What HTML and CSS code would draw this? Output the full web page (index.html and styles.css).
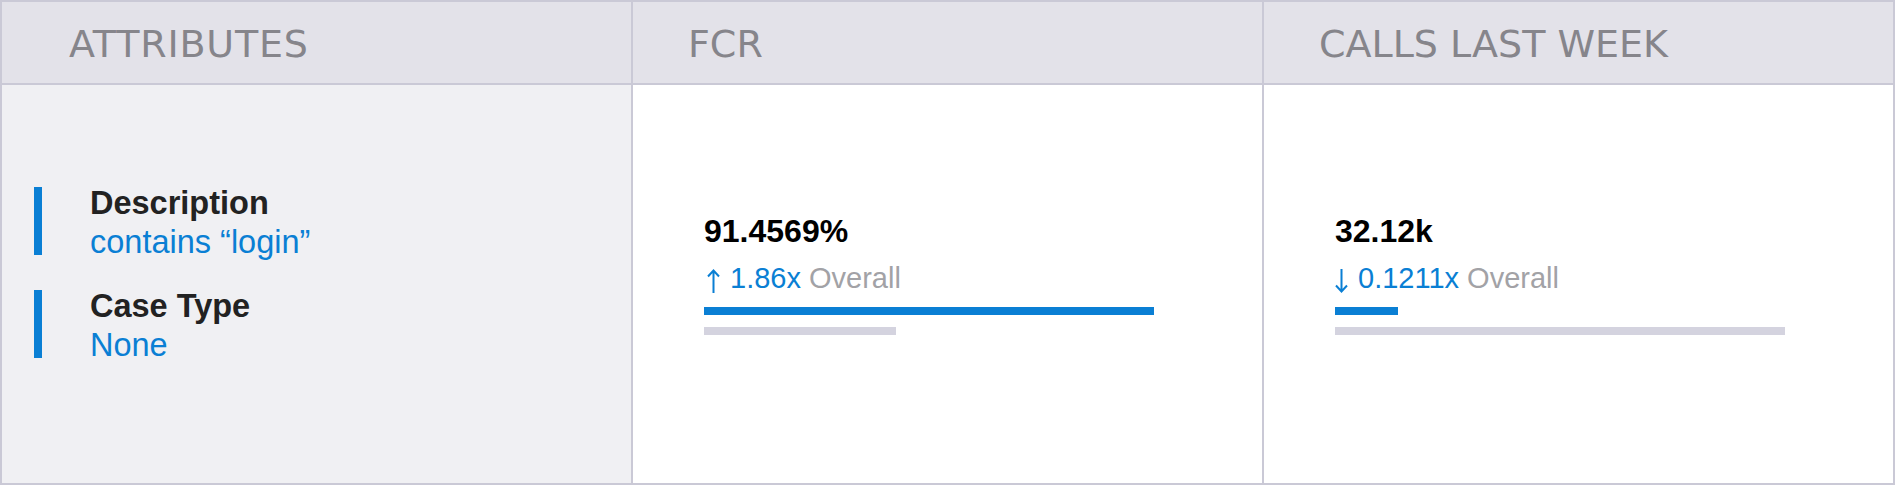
FILE: index.html
```html
<!DOCTYPE html>
<html>
<head>
<meta charset="utf-8">
<link rel="stylesheet" href="styles.css">
</head>
<body>
<div class="table">
  <div class="head first">ATTRIBUTES</div>
  <div class="head">FCR</div>
  <div class="head">CALLS LAST WEEK</div>

  <div class="cell attrs">
    <div class="attr-list">
      <div class="attr">
        <span class="attr-bar"></span>
        <div class="attr-text">
          <div class="attr-name">Description</div>
          <div class="attr-value">contains “login”</div>
        </div>
      </div>
      <div class="attr">
        <span class="attr-bar"></span>
        <div class="attr-text">
          <div class="attr-name">Case Type</div>
          <div class="attr-value">None</div>
        </div>
      </div>
    </div>
  </div>

  <div class="cell metric">
    <div class="metric-body">
      <div class="metric-value">91.4569%</div>
      <div class="metric-sub">
        <svg class="arrow up" width="13" height="24" viewBox="0 0 13 24" aria-hidden="true"><path d="M6.5 1.5V24M1 7.5L6.5 1.5L12 7.5" fill="none" stroke="#0a7fd4" stroke-width="2"/></svg><span class="delta">1.86x</span> <span class="overall">Overall</span>
      </div>
      <div class="track"><div class="fill blue" style="width:100%"></div></div>
      <div class="track"><div class="fill grey" style="width:42.7%"></div></div>
    </div>
  </div>

  <div class="cell metric">
    <div class="metric-body">
      <div class="metric-value">32.12k</div>
      <div class="metric-sub">
        <svg class="arrow down" width="13" height="24" viewBox="0 0 13 24" aria-hidden="true"><path d="M6.5 0V22.5M1 16.5L6.5 22.5L12 16.5" fill="none" stroke="#0a7fd4" stroke-width="2"/></svg><span class="delta">0.1211x</span> <span class="overall">Overall</span>
      </div>
      <div class="track"><div class="fill blue" style="width:14%"></div></div>
      <div class="track"><div class="fill grey" style="width:100%"></div></div>
    </div>
  </div>
</div>
</body>
</html>
```

FILE: styles.css
```css
* { box-sizing: border-box; }

html, body {
  margin: 0;
  padding: 0;
  background: #ffffff;
}

.table {
  width: 1895px;
  height: 485px;
  border: 2px solid #cac9d6;
  background: #cac9d6;
  display: grid;
  grid-template-columns: 629px 629px 629px;
  grid-template-rows: 81px 398px;
  column-gap: 2px;
  row-gap: 2px;
  font-family: "Liberation Sans", Arial, sans-serif;
}

.head {
  background: #e3e2e9;
  color: #86858b;
  font-family: "DejaVu Sans", sans-serif;
  font-size: 38px;
  line-height: 44px;
  padding: 20px 0 17px 55px;
  white-space: nowrap;
}

.head.first {
  padding-left: 67px;
  letter-spacing: 0.8px;
}

.cell {
  background: #ffffff;
  display: flex;
  flex-direction: column;
  justify-content: center;
  padding-bottom: 20px;
}

.cell.attrs {
  background: #f0f0f3;
  padding-left: 32px;
}

.attr-list {
  display: flex;
  flex-direction: column;
  gap: 25px;
}

.attr {
  display: flex;
  align-items: flex-start;
}

.attr-bar {
  width: 8px;
  height: 68px;
  margin-top: 3px;
  background: #0a7fd4;
  flex: none;
}

.attr-text {
  margin-left: 48px;
  font-size: 32.5px;
  line-height: 39px;
}

.attr-name {
  font-weight: bold;
  color: #222222;
}

.attr-value {
  color: #0a7fd4;
}

.cell.metric {
  padding-left: 71px;
}

.metric-body {
  width: 450px;
}

.metric-value {
  font-size: 32px;
  line-height: 37px;
  font-weight: bold;
  color: #000000;
}

.metric-sub {
  margin-top: 12px;
  font-size: 29px;
  line-height: 33px;
  white-space: nowrap;
}

.arrow {
  vertical-align: -5px;
  margin-right: 10px;
}

.arrow.up {
  margin-left: 3px;
}

.arrow.down {
  margin-left: 0;
}

.delta {
  color: #0a7fd4;
}

.overall {
  color: #a2a2a6;
}

.track {
  height: 8px;
  margin-top: 12px;
}

.fill {
  height: 8px;
}

.fill.blue {
  background: #0a7fd4;
}

.fill.grey {
  background: #d4d3df;
}
```
